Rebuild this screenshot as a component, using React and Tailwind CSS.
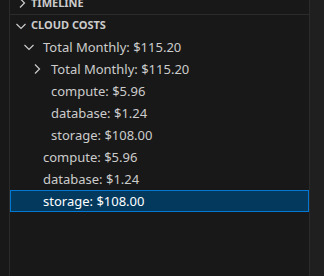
import React from "react";

const ChevronRight = () => (
  <svg width="16" height="16" viewBox="0 0 16 16" fill="none">
    <path d="M6 3.5L10.5 8L6 12.5" stroke="#cccccc" strokeWidth="1.2" />
  </svg>
);
const ChevronDown = () => (
  <svg width="16" height="16" viewBox="0 0 16 16" fill="none">
    <path d="M3.5 6L8 10.5L12.5 6" stroke="#cccccc" strokeWidth="1.2" />
  </svg>
);

const font = { fontFamily: '"Noto Sans", "Open Sans", sans-serif' };

function Row({ indent, twistie, label, selected }) {
  return (
    <div
      className={
        "h-[22px] flex items-center text-[13px] " +
        (selected
          ? "bg-[#04395e] border border-[#0078d4] text-white"
          : "text-[#cccccc] border border-transparent")
      }
    >
      <div style={{ width: indent }} className="shrink-0" />
      <div className="w-[16px] h-[16px] shrink-0 flex items-center justify-center">
        {twistie === "down" ? <ChevronDown /> : twistie === "right" ? <ChevronRight /> : null}
      </div>
      <div className="w-[6px] shrink-0" />
      <span className="whitespace-nowrap leading-[22px]">{label}</span>
    </div>
  );
}

export default function App() {
  return (
    <div className="w-[324px] h-[276px] bg-[#181818] flex overflow-hidden" style={font}>
      <div className="w-[10px] h-full border-r border-[#2b2b2b] shrink-0" />
      <div className="w-[300px] h-full border-r border-[#2b2b2b] shrink-0 flex flex-col">
        <div className="mt-[-8px] h-[22px] flex items-center shrink-0">
          <div className="w-[4px]" />
          <div className="w-[16px] h-[16px] flex items-center justify-center">
            <ChevronRight />
          </div>
          <span className="ml-[1px] text-[11px] font-bold text-[#cccccc] tracking-normal">TIMELINE</span>
        </div>
        <div className="h-[22px] border-t border-[#2b2b2b] flex items-center shrink-0">
          <div className="w-[3px]" />
          <div className="w-[16px] h-[16px] flex items-center justify-center">
            <ChevronDown />
          </div>
          <span className="ml-[2px] text-[11px] font-bold text-[#cccccc]">CLOUD COSTS</span>
        </div>
        <Row indent={10} twistie="down" label="Total Monthly: $115.20" />
        <Row indent={18} twistie="right" label="Total Monthly: $115.20" />
        <Row indent={18} label="compute: $5.96" />
        <Row indent={18} label="database: $1.24" />
        <Row indent={18} label="storage: $108.00" />
        <Row indent={10} label="compute: $5.96" />
        <Row indent={10} label="database: $1.24" />
        <Row indent={10} label="storage: $108.00" selected />
      </div>
      <div className="flex-1 h-full bg-[#1f1f1f]" />
    </div>
  );
}
